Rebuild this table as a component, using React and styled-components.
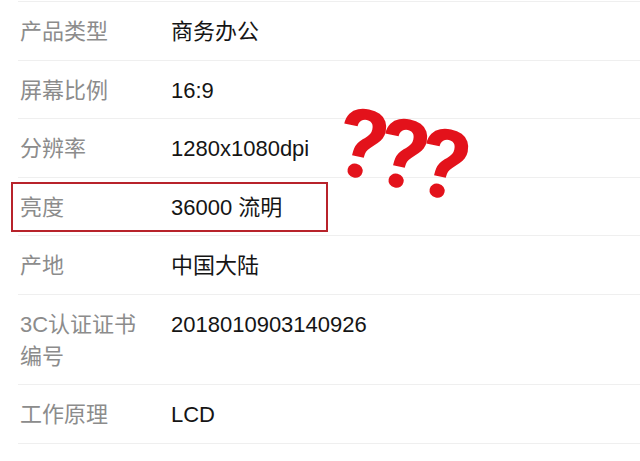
import { createGlobalStyle, styled } from "styled-components";

const specs = [
  { label: "产品类型", value: "商务办公" },
  { label: "屏幕比例", value: "16:9" },
  { label: "分辨率", value: "1280x1080dpi" },
  { label: "亮度", value: "36000 流明", marked: true },
  { label: "产地", value: "中国大陆" },
  { label: "3C认证证书编号", value: "2018010903140926" },
  { label: "工作原理", value: "LCD" },
];

function App() {
  return (
    <>
      <GlobalStyle />
      <Page>
        <List>
          {specs.map((item) => (
            <Row key={item.label} $marked={item.marked}>
              <Label>{item.label}</Label>
              <Value>{item.value}</Value>
            </Row>
          ))}
        </List>
        <Marks>
          <Mark $drop={0}>?</Mark>
          <Mark $drop={10}>?</Mark>
          <Mark $drop={20}>?</Mark>
        </Marks>
      </Page>
    </>
  );
}
export default App;

const GlobalStyle = createGlobalStyle`
  body {
    margin: 0;
    background: #ffffff;
    font-family: "Liberation Sans", "Noto Sans CJK SC", sans-serif;
  }
`;
const Page = styled.div`
  position: relative;
  width: 640px;
  height: 461px;
  overflow: hidden;
  background: #ffffff;
`;
const List = styled.div`
  margin-top: 1px;
  margin-left: 18px;
  border-top: 1px solid #efefef;
`;
const Row = styled.div`
  position: relative;
  display: flex;
  flex-direction: row;
  align-items: flex-start;
  padding: 14px 0 11.5px 2px;
  border-bottom: 1px solid #efefef;
  ${(p) =>
    p.$marked &&
    `
    &::after {
      content: "";
      position: absolute;
      left: -7px;
      top: 4px;
      bottom: 3px;
      width: 313px;
      border: 2px solid #b8232b;
    }
  `}
`;
const Label = styled.div`
  width: 130px;
  margin-right: 21px;
  font-size: 22px;
  line-height: 32px;
  color: #8c8c8c;
`;
const Value = styled.div`
  font-size: 22px;
  line-height: 32px;
  color: #151515;
`;
const Marks = styled.div`
  position: absolute;
  left: 338px;
  top: 90px;
  display: flex;
  flex-direction: row;
  align-items: flex-start;
`;
const Mark = styled.span`
  display: block;
  margin-top: ${(p) => p.$drop}px;
  margin-right: -7px;
  font-family: Roboto, sans-serif;
  font-weight: 700;
  font-size: 96px;
  line-height: 110px;
  color: #e3121b;
  transform: rotate(12deg);
`;
